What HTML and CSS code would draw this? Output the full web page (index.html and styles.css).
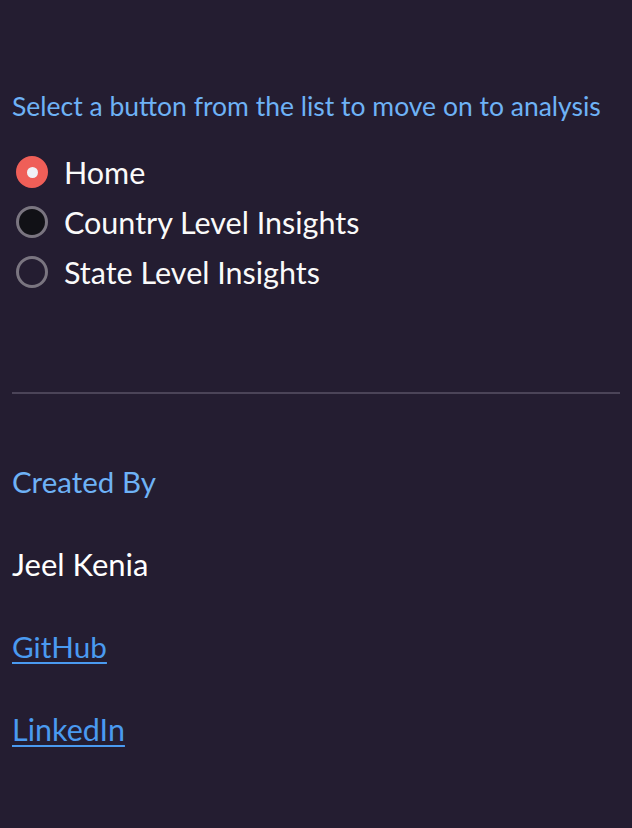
FILE: index.html
```html
<!DOCTYPE html>
<html>
<head>
<meta charset="utf-8">
<link rel="stylesheet" href="styles.css">
</head>
<body>
<div class="sidebar">
  <p class="prompt">Select a button from the list to move on to analysis</p>
  <div class="radios">
    <label class="option"><span class="radio checked"></span><span class="label">Home</span></label>
    <label class="option"><span class="radio hover"></span><span class="label">Country Level Insights</span></label>
    <label class="option"><span class="radio"></span><span class="label">State Level Insights</span></label>
  </div>
  <hr class="divider">
  <p class="heading">Created By</p>
  <p class="name">Jeel Kenia</p>
  <p class="linkrow"><a href="#" class="link github">GitHub</a></p>
  <p class="linkrow"><a href="#" class="link">LinkedIn</a></p>
</div>
</body>
</html>
```
FILE: styles.css
```css
html, body {
  margin: 0;
  padding: 0;
  background: #241d31;
  height: 100%;
}
body {
  font-family: "Lato", "Liberation Sans", sans-serif;
  color: #ffffff;
}
.sidebar {
  padding: 90px 12px 0 12px;
  display: flex;
  flex-direction: column;
}
.prompt {
  margin: 0;
  font-size: 26.5px;
  line-height: 32px;
  color: #6eb2f6;
}
.radios {
  display: flex;
  flex-direction: column;
  margin-top: 25px;
}
.option {
  display: flex;
  align-items: center;
  height: 50px;
  gap: 16px;
  padding-left: 4px;
}
.radio {
  width: 26px;
  height: 26px;
  border-radius: 50%;
  border: 3px solid #7a7580;
  background: #241d31;
  box-sizing: content-box;
  display: flex;
  align-items: center;
  justify-content: center;
}
.radio.hover {
  background: #111116;
}
.radio.checked {
  background: #ef5f58;
  border-color: #ef5f58;
}
.radio.checked::after {
  content: "";
  width: 11px;
  height: 11px;
  border-radius: 50%;
  background: #f0f2f6;
}
.label {
  font-size: 30.5px;
  line-height: 36px;
  color: #fafafa;
}
.divider {
  margin: 95px 0 0 0;
  border: 0;
  height: 2px;
  background: #4b4458;
}
.heading {
  margin: 70px 0 0 0;
  font-size: 29.5px;
  line-height: 36px;
  color: #6eb2f6;
}
.name {
  margin: 46px 0 0 0;
  font-size: 31px;
  line-height: 36px;
}
.linkrow {
  margin: 46px 0 0 0;
  font-size: 30.5px;
  line-height: 36px;
}
.link {
  color: #4a9af0;
  text-decoration: underline;
  text-decoration-thickness: 2px;
  text-underline-offset: 4px;
}
.link.github {
  font-size: 29.7px;
}
```
